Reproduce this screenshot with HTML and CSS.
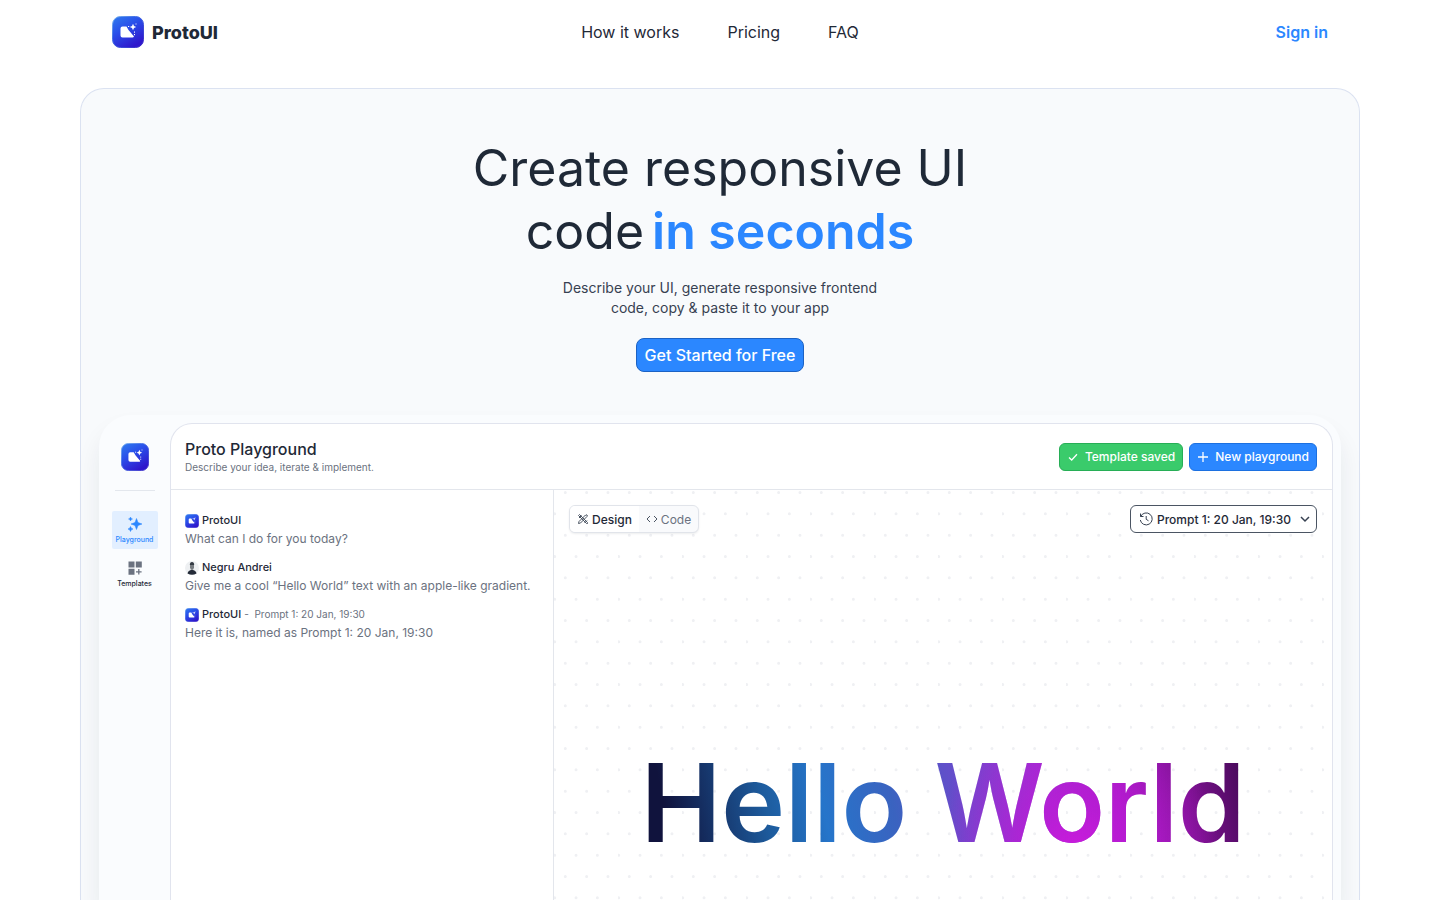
FILE: index.html
```html
<!DOCTYPE html>
<html lang="en">
<head>
<meta charset="utf-8">
<meta name="viewport" content="width=device-width, initial-scale=1">
<title>ProtoUI</title>
<link rel="stylesheet" href="styles.css">
</head>
<body>
<svg class="defs" aria-hidden="true">
  <defs>
    <linearGradient id="brand" x1="0" y1="0" x2="0.6" y2="1">
      <stop offset="0" stop-color="#2f7bee"/><stop offset="0.45" stop-color="#2a50ea"/><stop offset="1" stop-color="#2f17cc"/>
    </linearGradient>
    <linearGradient id="brand-edge" x1="0" y1="0" x2="1" y2="1">
      <stop offset="0" stop-color="#7db8f0"/><stop offset="0.4" stop-color="#3f6be6"/><stop offset="1" stop-color="#3a24c4"/>
    </linearGradient>
    <symbol id="logo" viewBox="0 0 32 32">
      <rect x="0.5" y="0.5" width="31" height="31" rx="8" fill="url(#brand)" stroke="url(#brand-edge)"/>
      <path d="M10.500 10.500H14.500L16.500 14L22 20.500Q21.500 21.500 20.500 21.500H10.500Q8.500 21.500 8.500 19.500V12.500Q8.500 10.500 10.500 10.500Z" fill="#fff"/>
      <path d="M21 7.800L22 10L24.200 11L22 12L21 14.200L20 12L17.800 11L20 10Z" fill="#fff"/>
      <path d="M16 10.500h1.200M22.500 15.500v1.200M22.500 18v1.200M23.500 8h1" stroke="#fff" fill="none"/>
    </symbol>
  </defs>
</svg>

<header class="site-header">
  <a class="brand" href="#"><svg class="brand-logo" aria-hidden="true"><use href="#logo"/></svg>ProtoUI</a>
  <nav class="site-nav">
    <a href="#how">How it works</a>
    <a href="#pricing">Pricing</a>
    <a href="#faq">FAQ</a>
  </nav>
  <a class="sign-in" href="#signin">Sign in</a>
</header>

<main class="hero">
  <h1 class="hero-title">Create responsive UI<br><span class="hero-word">code</span><strong>in seconds</strong></h1>
  <p class="hero-text">Describe your UI, generate responsive frontend code, copy &amp; paste it to your app</p>
  <button class="cta" type="button">Get Started for Free</button>

  <section class="app" aria-label="Proto Playground">
    <aside class="rail">
      <svg class="rail-logo" aria-hidden="true"><use href="#logo"/></svg>
      <a class="rail-item active" href="#playground">
        <svg viewBox="0 0 16 16" aria-hidden="true"><path d="M9.500 2.500L11 6.500L15 8L11 9.500L9.500 13.500L8 9.500L4 8L8 6.500ZM3.500 1l.6 1.400 1.400.6-1.400.6-.6 1.400-.6-1.400L1.500 3l1.400-.6ZM3.500 10.500l.8 1.700 1.700.8-1.700.8-.8 1.700-.8-1.700L1 13l1.700-.8Z" fill="currentColor" stroke="currentColor" stroke-width=".5"/></svg>
        Playground
      </a>
      <a class="rail-item" href="#templates">
        <svg viewBox="0 0 16 16" aria-hidden="true"><path d="M1.500 1.500h6v6h-6zM8.800 1.500h6v6h-6zM1.500 8.800h6v6h-6z" fill="#6b7280"/><path d="M11.800 9v5.600M9 11.800h5.600" stroke="#6b7280" stroke-width="1.300"/></svg>
        Templates
      </a>
    </aside>

    <div class="panel">
      <header class="panel-header">
        <div>
          <h2>Proto Playground</h2>
          <p>Describe your idea, iterate &amp; implement.</p>
        </div>
        <div class="panel-actions">
          <button class="action saved" type="button"><svg viewBox="0 0 12 12" aria-hidden="true"><path d="M2 6.500L4.700 9L10 3.300"/></svg>Template saved</button>
          <button class="action create" type="button"><svg viewBox="0 0 12 12" aria-hidden="true"><path d="M6 1v10M1 6h10"/></svg>New playground</button>
        </div>
      </header>

      <div class="workspace">
        <div class="chat">
          <article class="message">
            <h3><svg aria-hidden="true"><use href="#logo"/></svg>ProtoUI</h3>
            <p>What can I do for you today?</p>
          </article>
          <article class="message">
            <h3><svg viewBox="0 0 14 14" aria-hidden="true"><circle cx="7" cy="7" r="7" fill="#eef0f2"/><path d="M2.500 12.500Q3 9.500 6 9L8 9Q11 9.500 11.500 12.500Q7 15 2.500 12.500Z" fill="#242b38"/><path d="M5 3.500h4v3q-.5 2.500-2 2.500t-2-2.500z" fill="#777b80"/><path d="M4.800 4Q4.800 1 7 1T9.200 4Z" fill="#343a43"/></svg>Negru Andrei</h3>
            <p>Give me a cool “Hello World” text with an apple-like gradient.</p>
          </article>
          <article class="message">
            <h3><svg aria-hidden="true"><use href="#logo"/></svg>ProtoUI <span>-&nbsp; Prompt 1: 20 Jan, 19:30</span></h3>
            <p>Here it is, named as Prompt 1: 20 Jan, 19:30</p>
          </article>
        </div>

        <div class="canvas">
          <svg class="dots" aria-hidden="true">
            <defs>
              <pattern id="grid" width="64" height="128" patternUnits="userSpaceOnUse">
                <g fill="none" stroke="#eff0f3" stroke-width="3" stroke-linecap="round" stroke-dasharray="0 21.333">
                  <path d="M11.300 2.500H64M.7 23.800H64M11.300 45.200H64M.7 66.500H64M11.300 87.800H64M.7 109.200H64"/>
                </g>
              </pattern>
            </defs>
            <rect width="100%" height="100%" fill="url(#grid)"/>
          </svg>
          <div class="canvas-bar">
            <div class="view-switch">
              <button class="selected" type="button"><svg viewBox="0 0 12 12" aria-hidden="true"><path d="M1.500 2.500L2.500 1.500L10.500 9.500V10.500H9.500ZM1.500 10.500L2 8.500L8.500 2L10 3.500L3.500 10ZM9.200 1.300L10.700 2.800M2 5L4.500 2.500M7.500 10L10 7.500"/></svg>Design</button>
              <button type="button"><svg viewBox="0 0 12 12" aria-hidden="true"><path d="M4 3L1 6L4 9M8 3L11 6L8 9"/></svg>Code</button>
            </div>
            <div class="version">
              <svg class="history" viewBox="0 0 14 14" aria-hidden="true"><path d="M1.500 1.500V4.500H4.500M1.700 4.500A6 6 0 1 1 1.300 8M7.200 4V7.300L9.500 8.800"/></svg>
              <select aria-label="Prompt version"><option>Prompt 1: 20 Jan, 19:30</option></select>
              <svg class="chevron" viewBox="0 0 10 10" aria-hidden="true"><path d="M1 3L5 7L9 3"/></svg>
            </div>
          </div>
          <p class="result">Hello World</p>
        </div>
      </div>
    </div>
  </section>
</main>
</body>
</html>
```

FILE: styles.css
```css
* { box-sizing: border-box; }

body {
  display: flex;
  flex-direction: column;
  min-height: 100vh;
  margin: 0;
  background: #fff;
  color: #1f2937;
  font-family: Inter, "Liberation Sans", sans-serif;
}

h1, h2, h3, p { margin: 0; }
a { color: inherit; text-decoration: none; }
button, select { font: inherit; cursor: pointer; }
.defs { position: absolute; width: 0; height: 0; }

.site-header {
  display: grid;
  grid-template-columns: 1fr auto 1fr;
  align-items: center;
  height: 64px;
  padding: 0 112px;
}
.brand { display: flex; align-items: center; gap: 8px; font-size: 18px; font-weight: 800; }
.brand-logo { width: 32px; height: 32px; }
.site-nav { display: flex; gap: 48px; font-size: 16px; }
.sign-in { justify-self: end; color: #2b87ff; font-size: 16px; font-weight: 600; }

.hero {
  display: flex;
  flex: 1;
  flex-direction: column;
  align-items: center;
  margin: 24px 80px 0;
  padding: 48px 18px 0;
  border: 1px solid #dbe2f1;
  border-bottom: 0;
  border-radius: 24px 24px 0 0;
  background: #f8fafc;
}
.hero-title { font-size: 50px; font-weight: 400; line-height: 63px; text-align: center; }
.hero-word { margin-right: 8px; }
.hero-title strong { color: #2b87ff; font-weight: 600; }
.hero-text { max-width: 330px; margin-top: 15px; color: #374151; font-size: 14px; line-height: 20px; text-align: center; }
.cta {
  height: 34px;
  margin-top: 20px;
  padding: 0 8px;
  border: 1px solid #1c62c4;
  border-radius: 8px;
  background: #2b87ff;
  color: #fff;
  font-size: 16px;
  font-weight: 500;
}

.app {
  display: flex;
  flex: 1;
  align-self: stretch;
  margin-top: 43px;
  padding: 8px 8px 0 0;
  border-radius: 32px 32px 0 0;
  background: #fafcfe;
  box-shadow: 0 16px 24px #1f293714;
}
.rail { display: flex; flex-direction: column; align-items: center; width: 71px; padding-top: 20px; }
.rail-logo { width: 28px; height: 28px; }
.rail-item {
  display: flex;
  flex-direction: column;
  align-items: center;
  justify-content: center;
  gap: 3px;
  width: 46px;
  height: 38px;
  margin-bottom: 6px;
  border-radius: 2px;
  font-size: 7px;
  font-weight: 500;
  line-height: 9px;
}
.rail-logo + .rail-item { position: relative; margin-top: 40px; }
.rail-logo + .rail-item::before { position: absolute; top: -21px; right: 3px; left: 3px; height: 1px; background: #e3e7ed; content: ""; }
.rail-item svg { width: 16px; height: 16px; }
.rail-item.active { background: #e2efff; color: #2b87ff; }

.panel {
  display: flex;
  flex: 1;
  flex-direction: column;
  overflow: hidden;
  border: 1px solid #e1e4ee;
  border-bottom: 0;
  border-radius: 22px 22px 0 0;
  background: #fff;
}
.panel-header {
  display: flex;
  align-items: center;
  justify-content: space-between;
  height: 66px;
  padding: 0 15px 0 14px;
  border-bottom: 1px solid #e3e6ec;
}
.panel-header h2 { font-size: 16px; font-weight: 500; line-height: 20px; }
.panel-header p { color: #6b7280; font-size: 10px; line-height: 16px; }
.panel-actions { display: flex; gap: 6px; }
.action {
  display: flex;
  align-items: center;
  gap: 6px;
  height: 28px;
  padding: 0 7px;
  border: 1px solid #1c70e0;
  border-radius: 6px;
  color: #fff;
  font-size: 12px;
  font-weight: 500;
}
.action svg { width: 12px; height: 12px; fill: none; stroke: currentColor; stroke-width: 1.3; }
.saved { border-color: #27ae56; background: #3acb6b; }
.create { background: #2b87ff; }

.workspace { display: flex; flex: 1; }
.chat { display: flex; flex-direction: column; gap: 10px; width: 383px; padding: 22px 14px; border-right: 1px solid #e3e6ec; }
.message h3 { display: flex; align-items: center; gap: 3px; font-size: 11px; font-weight: 500; line-height: 17px; }
.message h3 svg { width: 14px; height: 14px; }
.message h3 span { color: #6b7280; font-size: 10px; font-weight: 400; }
.message p { color: #6b7280; font-size: 12px; line-height: 20px; white-space: nowrap; }

.canvas { position: relative; flex: 1; padding: 15px 15px 0; }
.dots { position: absolute; inset: 0; width: 100%; height: 100%; }
.canvas-bar { position: relative; display: flex; justify-content: space-between; }
.view-switch {
  display: flex;
  height: 28px;
  overflow: hidden;
  border: 1px solid #e1e4ea;
  border-radius: 6px;
  background: #f9fafc;
  box-shadow: 0 1px 2px #1f293714;
}
.view-switch button {
  display: flex;
  align-items: center;
  gap: 3px;
  padding: 0 7px;
  border: 0;
  background: none;
  color: #6b7280;
  font-size: 12px;
}
.view-switch .selected { background: #fff; color: #1f2937; font-weight: 500; }
.view-switch svg { width: 12px; height: 12px; fill: none; stroke: #4b5563; stroke-width: 1; }
.version { position: relative; }
.version select {
  width: 187px;
  height: 28px;
  padding: 0 24px 0 26px;
  border: 1px solid #4b5563;
  border-radius: 6px;
  appearance: none;
  background: #fff;
  color: #1f2937;
  font-size: 12px;
  font-weight: 500;
}
.version svg { position: absolute; fill: none; stroke: #374151; pointer-events: none; }
.history { top: 7px; left: 9px; width: 14px; height: 14px; }
.chevron { top: 9px; right: 7px; width: 10px; height: 10px; stroke-width: 1.5; }
.result {
  position: relative;
  width: max-content;
  margin: 198px auto 0;
  background:
    radial-gradient(circle at 72% 85%, #cb1bdc 0, #bd1bd6cc 10%, #a51bd000 32%),
    linear-gradient(78deg, #10133d 6%, #1d5c9e 22%, #2675ca 31%, #3a63c0 42%, #6a4bcc 54%, #9a32d2 66%, #a51bc4 78%, #77118b 90%, #4a0a5c 98%);
  background-clip: text;
  color: transparent;
  font-size: 108px;
  font-weight: 600;
  line-height: 144px;
}
```
